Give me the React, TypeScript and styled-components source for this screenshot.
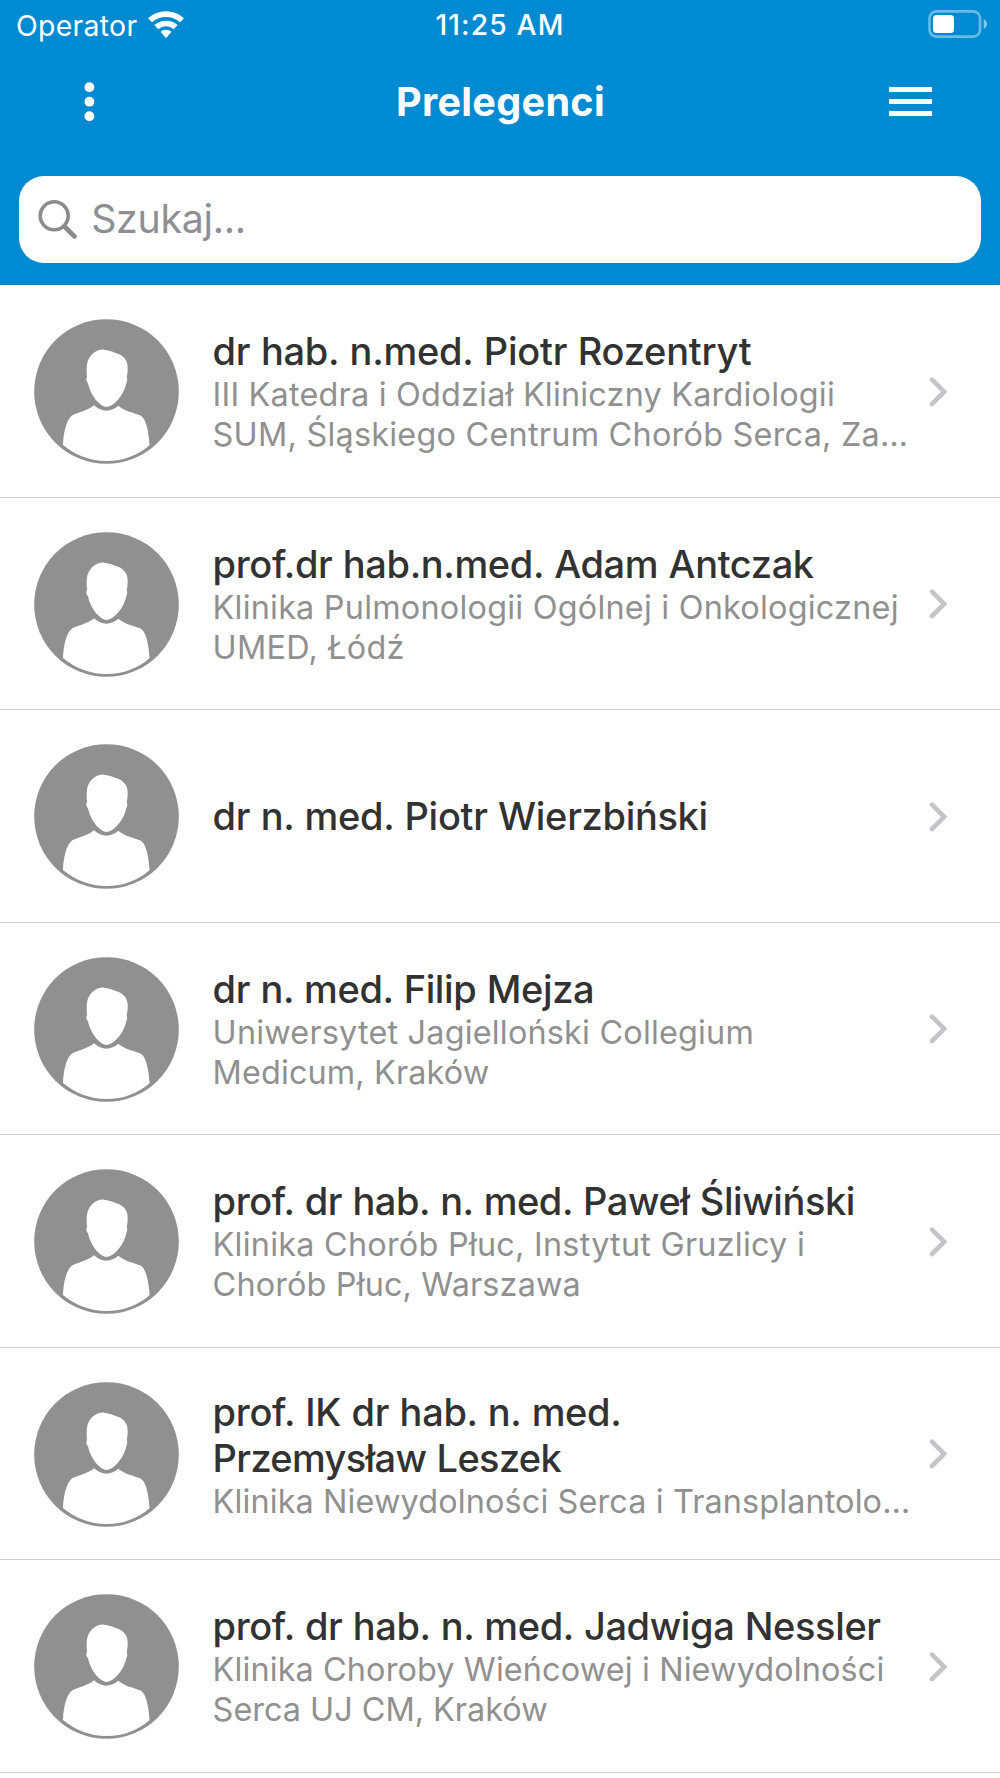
import React from "react";
import styled, { createGlobalStyle } from "styled-components";

const colors = {
  brand: "#008ad2",
  text: "#323232",
  muted: "#909090",
  placeholder: "#8e8e93",
  avatar: "#909090",
  chevron: "#c5c5c9",
  line: "#cfcfd0",
};

const GlobalStyle = createGlobalStyle`
  *, *::before, *::after { box-sizing: border-box; }
  body {
    margin: 0;
    background: #fff;
    font-family: Inter, "Liberation Sans", sans-serif;
    font-kerning: normal;
  }
`;

const Screen = styled.main`
  width: 1000px;
  height: 1778px;
  overflow: hidden;
  background: #fff;
`;

const Header = styled.header`
  height: 285px;
  display: flex;
  flex-direction: column;
  background: ${colors.brand};
  color: #fff;
`;

const StatusBar = styled.div`
  height: 51px;
  display: grid;
  grid-template-columns: 1fr auto 1fr;
  align-items: center;
  padding: 0 13px 0 16px;
`;

const Carrier = styled.div`
  display: flex;
  align-items: center;
  gap: 11px;
  font-size: 28.4px;
  letter-spacing: 0.3px;
  line-height: 51px;

  svg {
    margin-top: -3px;
  }
`;

const Clock = styled.time`
  margin-left: -3px;
  font-size: 28.2px;
  font-weight: 500;
  letter-spacing: 1.15px;
  line-height: 51px;
`;

const BatterySlot = styled.div`
  display: flex;
  justify-content: flex-end;

  svg {
    margin-top: -3px;
  }
`;

const NavBar = styled.div`
  height: 101px;
  display: grid;
  grid-template-columns: 1fr auto 1fr;
  align-items: center;
  padding: 0 68px 0 84px;
`;

const NavButton = styled.button<{ $end?: boolean }>`
  display: flex;
  justify-self: ${(p) => (p.$end ? "end" : "start")};
  padding: 0;
  border: 0;
  background: none;
  color: inherit;
`;

const Title = styled.h1`
  margin: 0 0 0 -15px;
  font-size: 39.6px;
  font-weight: 700;
  letter-spacing: 0.3px;
  line-height: 48px;
`;

const SearchField = styled.label`
  height: 87px;
  margin: 24.4px 19.2px 0 19.2px;
  padding: 0 18px;
  display: flex;
  align-items: center;
  gap: 14px;
  border-radius: 25px;
  background: #fff;
  color: ${colors.placeholder};
`;

const Placeholder = styled.span`
  font-size: 39.3px;
  letter-spacing: -0.3px;
  line-height: 48px;
  margin-top: -1px;
`;

const List = styled.ul`
  margin: 0;
  padding: 0;
  list-style: none;
`;

const Row = styled.li`
  height: 212.5px;
  padding: 2px 52px 0 34px;
  display: flex;
  align-items: center;
  border-bottom: 1px solid ${colors.line};
`;

const Info = styled.div<{ $top: number; $bottom: number }>`
  flex: 1;
  margin-left: 33.6px;
  padding: ${(p) => p.$top}px 0 ${(p) => p.$bottom}px;
  display: flex;
  flex-direction: column;
  white-space: nowrap;
`;

const Name = styled.span<{ $spacing: number }>`
  color: ${colors.text};
  font-size: 38px;
  font-weight: 500;
  line-height: 46px;
  letter-spacing: ${(p) => p.$spacing - 0.1}px;
  word-spacing: 0.7px;
`;

const Affiliation = styled.span<{ $spacing: number }>`
  color: ${colors.muted};
  font-size: 32.4px;
  line-height: 40.25px;
  letter-spacing: ${(p) => p.$spacing}px;

  ${Name} + & {
    margin-top: 0.9px;
  }
`;

function WifiIcon() {
  return (
    <svg width="36" height="27" viewBox="-18 -27 36 27" fill="#fff">
      <path d="M-17.9-19.8A26.7 26.7 0 0 1 17.9-19.8L14.1-15.7A21.1 21.1 0 0 0-14.1-15.7Z" />
      <path d="M-11.6-12.9A17.3 17.3 0 0 1 11.6-12.9L7.8-8.8A11.7 11.7 0 0 0-7.8-8.8Z" />
      <path d="M-5.5-6.2A8.3 8.3 0 0 1 5.5-6.2L.6-.6Q0 0-.6-.6Z" />
    </svg>
  );
}

function BatteryIcon() {
  return (
    <svg width="59" height="28" viewBox="0 0 59 28" fill="none">
      <rect x="1.5" y="1.4" width="50.6" height="25.2" rx="7" stroke="#fff" strokeOpacity=".42" strokeWidth="2.6" />
      <rect x="5" y="5" width="21" height="18" rx="3.5" fill="#fff" />
      <path d="M55.7 9.2C58 10 59 12 59 14S58 18 55.7 18.8Z" fill="#fff" fillOpacity=".5" />
    </svg>
  );
}

function DotsIcon() {
  return (
    <svg width="11" height="40" viewBox="0 0 11 40" fill="#fff">
      <circle cx="5.4" cy="5.2" r="4.9" />
      <circle cx="5.4" cy="19.7" r="4.9" />
      <circle cx="5.4" cy="34.2" r="4.9" />
    </svg>
  );
}

function MenuIcon() {
  return (
    <svg width="43" height="29" viewBox="0 0 43 29" fill="#fff">
      <rect width="43" height="5" />
      <rect y="12" width="43" height="5" />
      <rect y="24" width="43" height="5" />
    </svg>
  );
}

function SearchIcon() {
  return (
    <svg width="40" height="40" viewBox="0 0 40 40" fill="none" stroke="#8b8b8e" strokeLinecap="round">
      <circle cx="17.2" cy="15.8" r="14" strokeWidth="3.6" />
      <path d="M27.8 26.8L37.4 36.4" strokeWidth="4.8" />
    </svg>
  );
}

function Avatar() {
  return (
    <svg width="145" height="145" viewBox="102 57 435 435">
      <circle cx="319.5" cy="274.5" r="217" fill={colors.avatar} />
      <path
        fill="#fff"
        d="M319 321C300 320 272 288 264 250C259 245 257 237 261 231C260 215 259 200 262 188C268 165 290 147 312 149C330 151 342 157 358 163C376 172 384 188 383 205C383 215 382 225 380 231C383 237 382 244 379 249C371 288 340 320 319 321Z"
      />
      <path
        fill="#fff"
        d="M282 316Q300 332 319 332Q339 331 355 317C376 335 400 337 420 346C440 355 446 400 449 435C415 466 370 483 320 483C270 483 225 465 189 435C190 400 199 358 217 346C235 337 262 333 282 316Z"
      />
    </svg>
  );
}

function ChevronIcon() {
  return (
    <svg width="19" height="30" viewBox="0 0 19 30" fill="none">
      <path d="M3 2.6L15.2 14.8L3 27" stroke={colors.chevron} strokeWidth="4.6" strokeLinecap="round" />
    </svg>
  );
}

// Each line of text carries its own tracking in pixels.
type TextLine = [text: string, spacing: number];

interface Speaker {
  name: TextLine[];
  affiliation: TextLine[];
}

const speakers: Speaker[] = [
  {
    name: [["dr hab. n.med. Piotr Rozentryt", -0.14]],
    affiliation: [
      ["III Katedra i Oddział Kliniczny Kardiologii", 0.2],
      ["SUM, Śląskiego Centrum Chorób Serca, Za…", 0.24],
    ],
  },
  {
    name: [["prof.dr hab.n.med. Adam Antczak", -0.27]],
    affiliation: [
      ["Klinika Pulmonologii Ogólnej i Onkologicznej", 0.22],
      ["UMED, Łódź", 0.25],
    ],
  },
  { name: [["dr n. med. Piotr Wierzbiński", -0.21]], affiliation: [] },
  {
    name: [["dr n. med. Filip Mejza", -0.29]],
    affiliation: [
      ["Uniwersytet Jagielloński Collegium", 0.19],
      ["Medicum, Kraków", 0.13],
    ],
  },
  {
    name: [["prof. dr hab. n. med. Paweł Śliwiński", -0.33]],
    affiliation: [
      ["Klinika Chorób Płuc, Instytut Gruzlicy i", 0.24],
      ["Chorób Płuc, Warszawa", 0.14],
    ],
  },
  {
    name: [
      ["prof. IK dr hab. n. med.", -0.23],
      ["Przemysław Leszek", -0.54],
    ],
    affiliation: [["Klinika Niewydolności Serca i Transplantolo…", 0.12]],
  },
  {
    name: [["prof. dr hab. n. med. Jadwiga Nessler", -0.29]],
    affiliation: [
      ["Klinika Choroby Wieńcowej i Niewydolności", 0.12],
      ["Serca UJ CM, Kraków", 0],
    ],
  },
];

function SpeakerRow({ speaker }: { speaker: Speaker }) {
  const single = speaker.affiliation.length === 0;
  const top = single ? 0 : speaker.name.length > 1 ? 3 : 0.4;
  return (
    <Row>
      <Avatar />
      <Info $top={top} $bottom={single ? 1.5 : 0}>
        {speaker.name.map(([text, spacing]) => (
          <Name key={text} $spacing={spacing}>
            {text}
          </Name>
        ))}
        {speaker.affiliation.map(([text, spacing]) => (
          <Affiliation key={text} $spacing={spacing}>
            {text}
          </Affiliation>
        ))}
      </Info>
      <ChevronIcon />
    </Row>
  );
}

export default function App() {
  return (
    <Screen>
      <GlobalStyle />
      <Header>
        <StatusBar>
          <Carrier>
            Operator
            <WifiIcon />
          </Carrier>
          <Clock>11:25 AM</Clock>
          <BatterySlot>
            <BatteryIcon />
          </BatterySlot>
        </StatusBar>
        <NavBar>
          <NavButton>
            <DotsIcon />
          </NavButton>
          <Title>Prelegenci</Title>
          <NavButton $end>
            <MenuIcon />
          </NavButton>
        </NavBar>
        <SearchField>
          <SearchIcon />
          <Placeholder>Szukaj...</Placeholder>
        </SearchField>
      </Header>
      <List>
        {speakers.map((speaker) => (
          <SpeakerRow key={speaker.name[0][0]} speaker={speaker} />
        ))}
      </List>
    </Screen>
  );
}
